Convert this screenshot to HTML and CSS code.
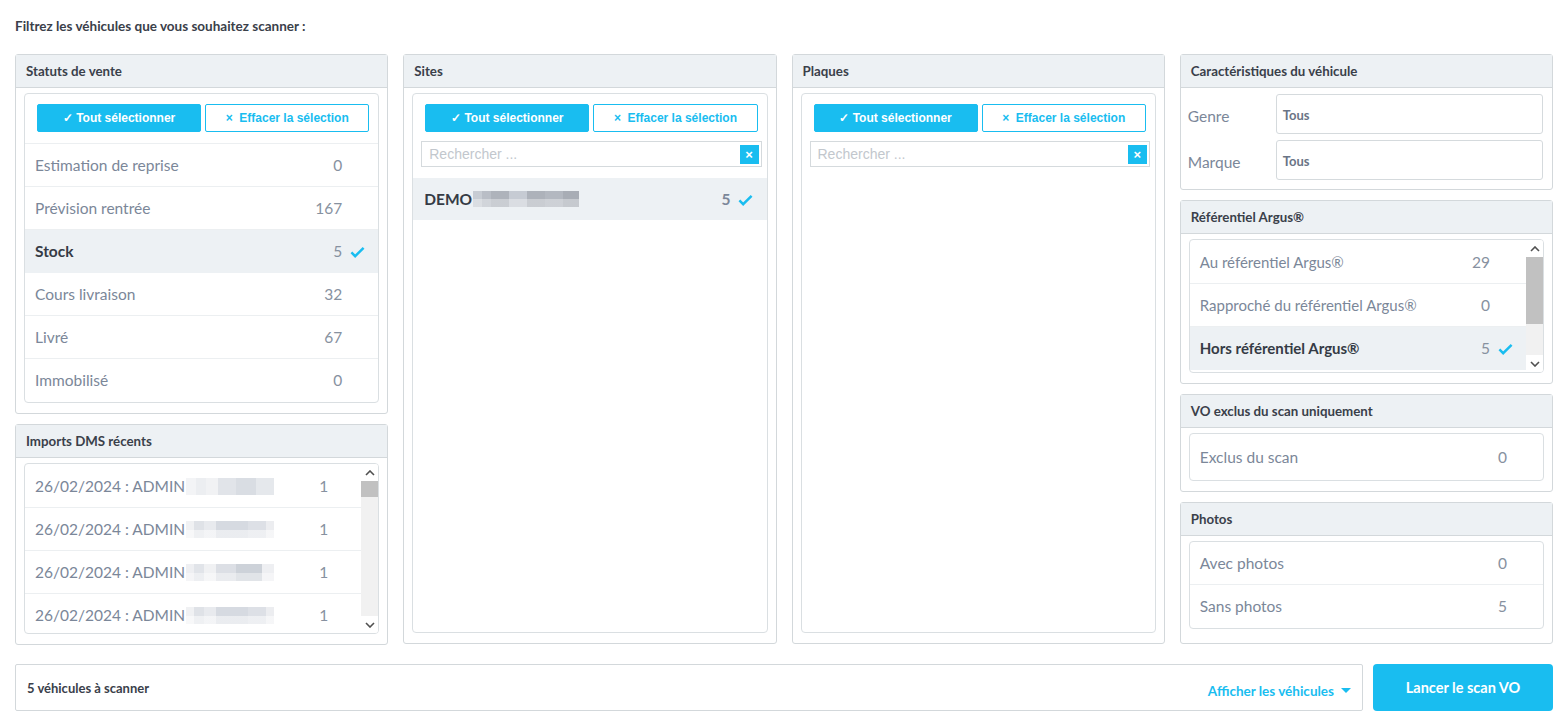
FILE: index.html
```html
<!DOCTYPE html>
<html lang="fr">
<head>
    <meta charset="UTF-8">
    <meta name="viewport" content="width=device-width, initial-scale=1.0">
    <title>Scan VO</title>
    <link rel="stylesheet" href="styles.css">
</head>
<body>

<div class="page">
    <p class="intro">Filtrez les véhicules que vous souhaitez scanner :</p>

    <div class="columns">
        <!-- colonne 1 -->
        <div class="col">
            <div class="panel">
                <div class="panel-head">Statuts de vente</div>
                <div class="panel-body">
                    <div class="box">
                        <div class="actions">
                            <button class="btn-all">&#10003; Tout sélectionner</button>
                            <button class="btn-clear">&times;&nbsp; Effacer la sélection</button>
                        </div>
                        <div class="row"><span class="label">Estimation de reprise</span><span class="count">0</span><span class="tick"></span></div>
                        <div class="row"><span class="label">Prévision rentrée</span><span class="count">167</span><span class="tick"></span></div>
                        <div class="row selected"><span class="label">Stock</span><span class="count">5</span><span class="tick"><svg viewBox="0 0 16 12" width="15" height="12"><path d="M1.5 6.5l4 4L14.5 1.5" fill="none" stroke="#19bdf0" stroke-width="2.6"/></svg></span></div>
                        <div class="row"><span class="label">Cours livraison</span><span class="count">32</span><span class="tick"></span></div>
                        <div class="row"><span class="label">Livré</span><span class="count">67</span><span class="tick"></span></div>
                        <div class="row last"><span class="label">Immobilisé</span><span class="count">0</span><span class="tick"></span></div>
                    </div>
                </div>
            </div>

            <div class="panel grow">
                <div class="panel-head">Imports DMS récents</div>
                <div class="panel-body">
                    <div class="box scroll-box imports">
                        <div class="scroll-list">
                            <div class="row"><span class="label">26/02/2024 : ADMIN<span class="pix pix-a"></span></span><span class="count">1</span></div>
                            <div class="row"><span class="label">26/02/2024 : ADMIN<span class="pix pix-b"></span></span><span class="count">1</span></div>
                            <div class="row"><span class="label">26/02/2024 : ADMIN<span class="pix pix-c"></span></span><span class="count">1</span></div>
                            <div class="row last"><span class="label">26/02/2024 : ADMIN<span class="pix pix-b"></span></span><span class="count">1</span></div>
                        </div>
                        <div class="scrollbar">
                            <span class="arrow"><svg viewBox="0 0 10 6" width="10" height="6"><path d="M1 5l4-4 4 4" fill="none" stroke="#505050" stroke-width="1.6"/></svg></span>
                            <div class="track"><div class="thumb thumb-small"></div></div>
                            <span class="arrow"><svg viewBox="0 0 10 6" width="10" height="6"><path d="M1 1l4 4 4-4" fill="none" stroke="#505050" stroke-width="1.6"/></svg></span>
                        </div>
                    </div>
                </div>
            </div>
        </div>

        <!-- colonne 2 -->
        <div class="col">
            <div class="panel grow">
                <div class="panel-head">Sites</div>
                <div class="panel-body">
                    <div class="box tall">
                        <div class="actions">
                            <button class="btn-all">&#10003; Tout sélectionner</button>
                            <button class="btn-clear">&times;&nbsp; Effacer la sélection</button>
                        </div>
                        <div class="search">
                            <input type="text" placeholder="Rechercher ...">
                            <span class="search-clear">&times;</span>
                        </div>
                        <div class="row selected site"><span class="label">DEMO<span class="pix pix-demo"></span></span><span class="count">5</span><span class="tick"><svg viewBox="0 0 16 12" width="15" height="12"><path d="M1.5 6.5l4 4L14.5 1.5" fill="none" stroke="#19bdf0" stroke-width="2.6"/></svg></span></div>
                    </div>
                </div>
            </div>
        </div>

        <!-- colonne 3 -->
        <div class="col">
            <div class="panel grow">
                <div class="panel-head">Plaques</div>
                <div class="panel-body">
                    <div class="box tall">
                        <div class="actions">
                            <button class="btn-all">&#10003; Tout sélectionner</button>
                            <button class="btn-clear">&times;&nbsp; Effacer la sélection</button>
                        </div>
                        <div class="search">
                            <input type="text" placeholder="Rechercher ...">
                            <span class="search-clear">&times;</span>
                        </div>
                    </div>
                </div>
            </div>
        </div>

        <!-- colonne 4 -->
        <div class="col">
            <div class="panel">
                <div class="panel-head">Caractéristiques du véhicule</div>
                <div class="fields">
                    <label class="field-label">Genre</label>
                    <div class="field-input">Tous</div>
                    <label class="field-label">Marque</label>
                    <div class="field-input">Tous</div>
                </div>
            </div>

            <div class="panel">
                <div class="panel-head">Référentiel Argus®</div>
                <div class="panel-body">
                    <div class="box scroll-box argus">
                        <div class="scroll-list">
                            <div class="row"><span class="label">Au référentiel Argus®</span><span class="count">29</span><span class="tick"></span></div>
                            <div class="row"><span class="label">Rapproché du référentiel Argus®</span><span class="count">0</span><span class="tick"></span></div>
                            <div class="row selected last"><span class="label">Hors référentiel Argus®</span><span class="count">5</span><span class="tick"><svg viewBox="0 0 16 12" width="15" height="12"><path d="M1.5 6.5l4 4L14.5 1.5" fill="none" stroke="#19bdf0" stroke-width="2.6"/></svg></span></div>
                        </div>
                        <div class="scrollbar">
                            <span class="arrow"><svg viewBox="0 0 10 6" width="10" height="6"><path d="M1 5l4-4 4 4" fill="none" stroke="#505050" stroke-width="1.6"/></svg></span>
                            <div class="track"><div class="thumb thumb-big"></div></div>
                            <span class="arrow"><svg viewBox="0 0 10 6" width="10" height="6"><path d="M1 1l4 4 4-4" fill="none" stroke="#505050" stroke-width="1.6"/></svg></span>
                        </div>
                    </div>
                </div>
            </div>

            <div class="panel">
                <div class="panel-head">VO exclus du scan uniquement</div>
                <div class="panel-body">
                    <div class="box">
                        <div class="row last short"><span class="label">Exclus du scan</span><span class="count">0</span><span class="tick"></span></div>
                    </div>
                </div>
            </div>

            <div class="panel grow">
                <div class="panel-head">Photos</div>
                <div class="panel-body">
                    <div class="box">
                        <div class="row"><span class="label">Avec photos</span><span class="count">0</span><span class="tick"></span></div>
                        <div class="row last"><span class="label">Sans photos</span><span class="count">5</span><span class="tick"></span></div>
                    </div>
                </div>
            </div>
        </div>
    </div>

    <div class="footer">
        <div class="summary">
            <span class="summary-text">5 véhicules à scanner</span>
            <a class="show-link" href="#">Afficher les véhicules <span class="caret"></span></a>
        </div>
        <button class="btn-scan">Lancer le scan VO</button>
    </div>
</div>

</body>
</html>
```

FILE: styles.css
```css
body {
    margin: 0;
    font-family: Lato, "Open Sans", sans-serif;
    background-color: #fff;
    color: #7b8799;
}

.page {
    padding: 0 15px 0 15px;
}

.intro {
    margin: 0;
    padding: 18px 0 20px 0;
    font-size: 13.5px;
    font-weight: bold;
    color: #3a404a;
}

.columns {
    display: grid;
    grid-template-columns: repeat(4, 1fr);
    gap: 15px;
    height: 590px;
}

.col {
    display: flex;
    flex-direction: column;
    gap: 10px;
    min-height: 0;
}

.panel {
    border: 1px solid #d3d8db;
    border-radius: 3px;
    background-color: #fff;
    display: flex;
    flex-direction: column;
}

.panel.grow {
    flex: 1;
}

.panel-head {
    background-color: #edf1f4;
    border-bottom: 1px solid #d3d8db;
    height: 32px;
    line-height: 33px;
    padding: 0 10px;
    font-size: 13.3px;
    font-weight: bold;
    color: #3a404a;
}

.panel-body {
    flex: 1;
    display: flex;
    flex-direction: column;
    padding: 5px 8px 10px 8px;
}

.box {
    border: 1px solid #dadfe2;
    border-radius: 4px;
    display: flex;
    flex-direction: column;
}

.box.tall {
    flex: 1;
}

.actions {
    display: flex;
    gap: 4px;
    padding: 10px 9px 11px 12px;
    border-bottom: 1px solid #eceff1;
}

/* dans Sites / Plaques la recherche suit directement les boutons */
.tall .actions {
    padding-bottom: 0;
    border-bottom: none;
}

.actions button {
    flex: 1;
    height: 28px;
    font-family: "Liberation Sans", Arial, sans-serif;
    font-size: 12px;
    font-weight: bold;
    cursor: pointer;
}

.btn-all {
    background-color: #19bdf0;
    border: 1px solid #19bdf0;
    border-radius: 2px;
    color: #fff;
}

.btn-clear {
    background-color: #fff;
    border: 1px solid #19bdf0;
    border-radius: 2px;
    color: #19bdf0;
}

.row {
    display: flex;
    align-items: center;
    height: 42px;
    border-bottom: 1px solid #eceff1;
    padding: 0 8px 0 10px;
    font-size: 15.5px;
}

.row.last {
    border-bottom-color: transparent;
}

.row.short {
    height: 45px;
}

.row .label {
    flex: 1;
    white-space: nowrap;
    display: flex;
    align-items: center;
}

.row .count {
    text-align: right;
    margin-right: 2px;
    color: #8791a0;
}

.row .tick {
    width: 26px;
    display: flex;
    justify-content: center;
    padding-top: 2px;
}

.row.selected {
    background-color: #edf1f4;
    border-bottom-color: #edf1f4;
}

.row.selected .label {
    font-weight: bold;
    color: #353b45;
}

/* zones masquées (noms floutés) */
.pix {
    display: inline-block;
    margin-left: 1px;
    height: 17px;
}

.pix-a {
    width: 88px;
    background:
        linear-gradient(90deg, #f3f4f6 0 10px, #eceef1 10px 20px, #f1f2f4 20px 32px, #e1e4e9 32px 50px, #d9dde3 50px 70px, #e5e8ec 70px 88px);
}

.pix-b {
    width: 88px;
    background:
        linear-gradient(180deg, transparent 0 9px, rgba(255,255,255,0.5) 9px),
        linear-gradient(90deg, #f0f1f3 0 8px, #dfe2e7 8px 18px, #e8eaee 18px 30px, #d6dae1 30px 62px, #dde0e6 62px 80px, #ecedf0 80px 88px);
}

.pix-c {
    width: 88px;
    background:
        linear-gradient(180deg, transparent 0 9px, rgba(255,255,255,0.4) 9px),
        linear-gradient(90deg, #eeeff2 0 8px, #e1e4e9 8px 18px, #f0f1f3 18px 30px, #dcdfe5 30px 50px, #cdd2d9 50px 76px, #eeeff2 76px 88px);
}

.pix-demo {
    width: 106px;
    height: 16px;
    background:
        linear-gradient(180deg, transparent 0 8px, rgba(255,255,255,0.35) 8px),
        linear-gradient(90deg, #c7ccd3 0 9px, #b9bec6 9px 18px, #aeb3bb 18px 36px, #c6cbd3 36px 54px, #adb2ba 54px 72px, #b3b8c0 72px 90px, #a8adb5 90px 106px);
}

.row.site {
    height: 42px;
    margin-top: 11px;
    padding-left: 11px;
    border-bottom: none;
}

.row.site .label {
    color: #353b45;
}

.row.site .count {
    font-weight: bold;
    color: #7b8799;
}

.search {
    margin: 9px 5px 0 8px;
    display: flex;
    align-items: center;
    border: 1px solid #d5dadd;
    height: 24px;
    padding-right: 2px;
}

.search input {
    flex: 1;
    min-width: 0;
    border: none;
    outline: none;
    height: 22px;
    padding: 0 7px;
    font-family: "Liberation Sans", Arial, sans-serif;
    font-size: 14px;
    color: #555;
}

.search input::placeholder {
    color: #c2c7cd;
}

.search-clear {
    width: 19px;
    height: 19px;
    background-color: #19bdf0;
    color: #fff;
    font-family: "Liberation Sans", Arial, sans-serif;
    font-size: 13px;
    font-weight: bold;
    text-align: center;
    line-height: 19px;
}

/* listes avec barre de défilement */
.scroll-box {
    flex-direction: row;
    overflow: hidden;
}

.imports {
    height: 169px;
}

.argus {
    height: 132px;
}

.scroll-list {
    flex: 1;
    padding-top: 1px;
}

.imports .row .count {
    margin-right: 25px;
}

.scrollbar {
    width: 17px;
    display: flex;
    flex-direction: column;
    background-color: #f1f1f1;
}

.arrow {
    height: 17px;
    display: flex;
    align-items: center;
    justify-content: center;
    background-color: #fff;
}

.track {
    flex: 1;
    background-color: #f1f1f1;
}

.thumb {
    background-color: #c1c1c1;
}

.thumb-small {
    height: 16px;
}

.thumb-big {
    height: 67px;
}

.argus .row .label {
    font-size: 15px;
}

/* champs caractéristiques */
.fields {
    display: grid;
    grid-template-columns: 88px 1fr;
    row-gap: 6px;
    padding: 6px 9px 9px 7px;
    align-items: center;
}

.field-label {
    font-size: 15.5px;
    color: #7b8799;
    padding-top: 4px;
}

.field-input {
    box-sizing: border-box;
    height: 40px;
    line-height: 40px;
    border: 1px solid #d5dadd;
    border-radius: 3px;
    padding: 0 6px;
    font-size: 13px;
    font-weight: bold;
    color: #6a7486;
}

/* barre du bas */
.footer {
    display: flex;
    gap: 10px;
    margin-top: 20px;
}

.summary {
    flex: 1;
    display: flex;
    align-items: center;
    justify-content: space-between;
    height: 45px;
    border: 1px solid #d3d8db;
    border-radius: 2px;
    padding: 0 11px;
}

.summary-text {
    font-size: 13px;
    font-weight: bold;
    color: #3a404a;
}

.show-link {
    font-size: 13.5px;
    font-weight: bold;
    color: #19bdf0;
    text-decoration: none;
    display: flex;
    align-items: center;
    gap: 7px;
    padding-top: 6px;
}

.caret {
    width: 0;
    height: 0;
    border-left: 5px solid transparent;
    border-right: 5px solid transparent;
    border-top: 5px solid #19bdf0;
}

.btn-scan {
    width: 180px;
    height: 47px;
    background-color: #19bdf0;
    border: none;
    border-radius: 4px;
    color: #fff;
    font-family: Lato, sans-serif;
    font-size: 14.5px;
    font-weight: bold;
    cursor: pointer;
}
```
